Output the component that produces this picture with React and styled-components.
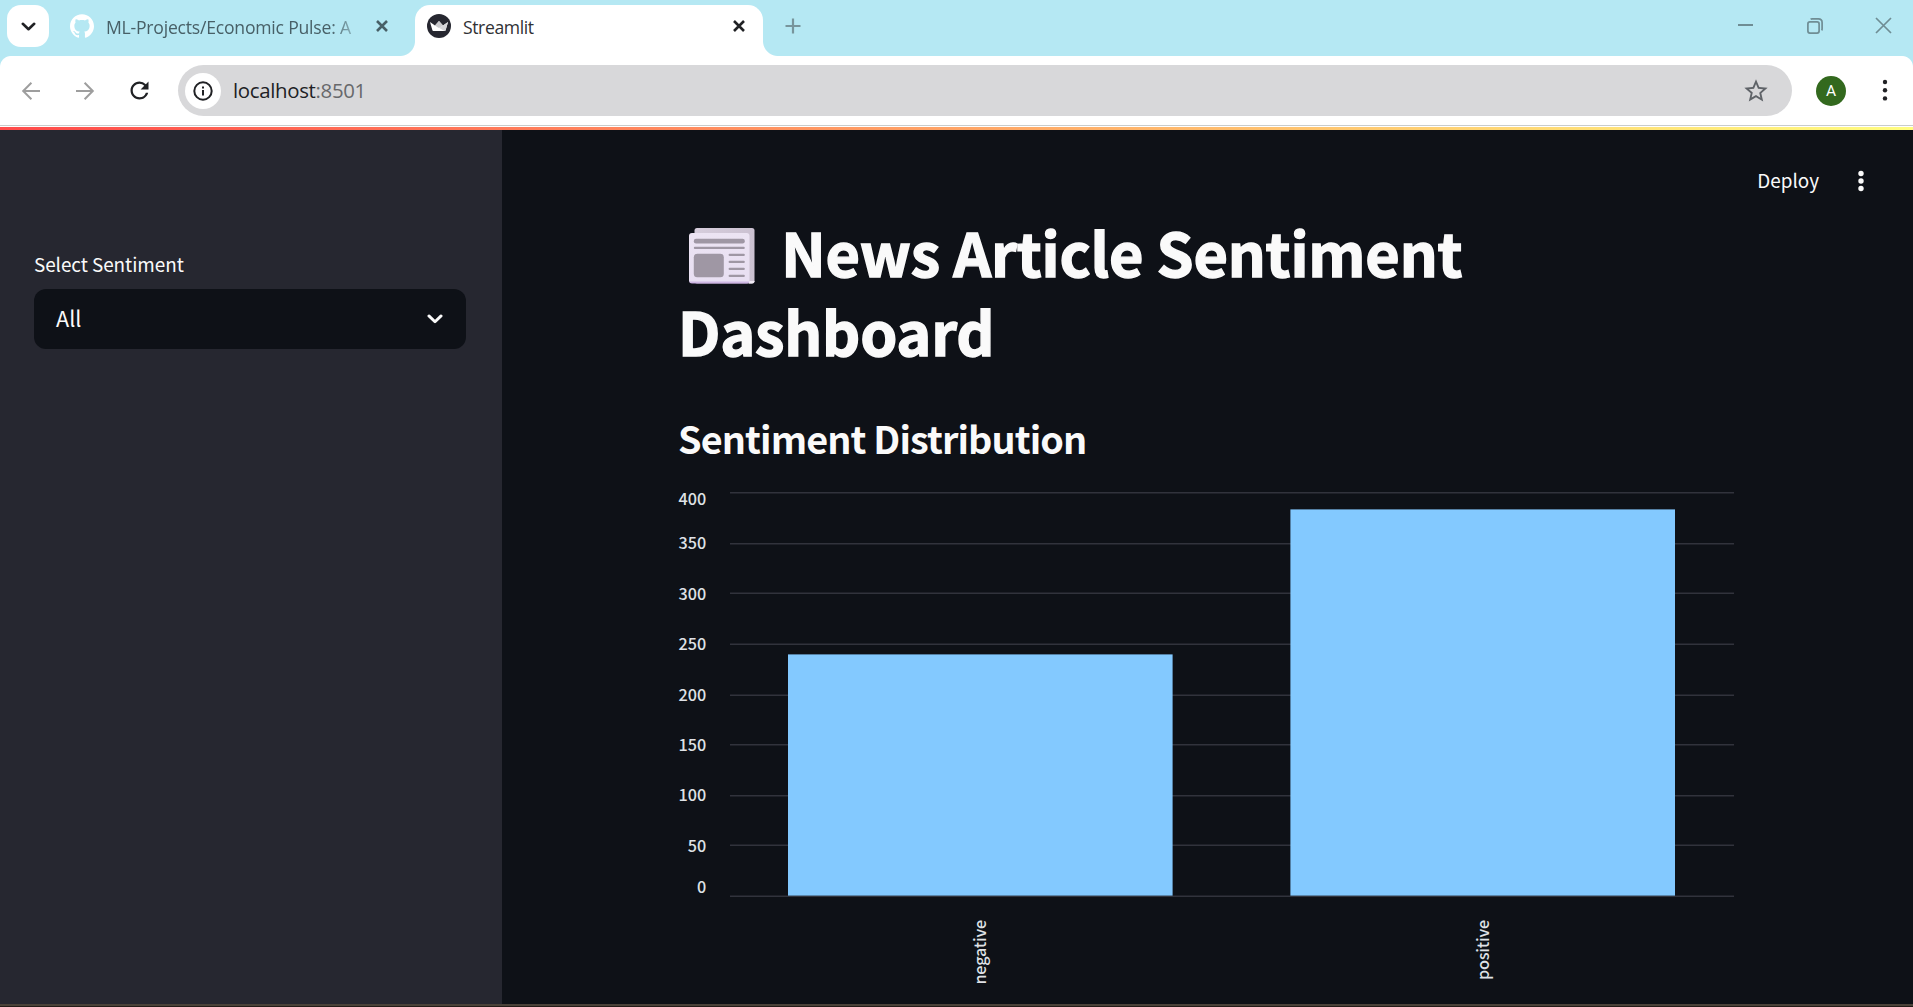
import React from 'react';
import styled, { createGlobalStyle } from 'styled-components';
import { MdRefresh, MdStarBorder } from 'react-icons/md';
import { SiGithub } from 'react-icons/si';

const GlobalStyle = createGlobalStyle`
  * { box-sizing: border-box; }
  html, body { margin: 0; padding: 0; overflow: hidden; }
  svg { display: block; flex: none; }
`;

const chromeFont = '"Open Sans", "Noto Sans", sans-serif';
const appFont = '"Noto Sans CJK SC", "Noto Sans", sans-serif';

const Window = styled.div`
  width: 1913px;
  height: 1007px;
  display: flex;
  flex-direction: column;
  overflow: hidden;
  background: #0e1117;
  font-family: ${chromeFont};
`;

/* ---------- browser frame ---------- */

const TabStrip = styled.div`
  height: 56px;
  flex: none;
  display: flex;
  align-items: flex-start;
  padding: 5px 21px 0 7px;
  background: #b5e8f3;
`;

const TabSearch = styled.button`
  width: 42px;
  height: 42px;
  padding: 0;
  border: 0;
  border-radius: 14px;
  background: #fff;
  display: flex;
  align-items: center;
  justify-content: center;
`;

const Tab = styled.div`
  width: ${(p) => (p.$active ? 348 : 345)}px;
  height: 51px;
  margin-left: ${(p) => (p.$active ? 0 : 21)}px;
  padding: ${(p) => (p.$active ? '0 18px 9px 12px' : '0 27px 9px 0')};
  display: flex;
  align-items: center;
  gap: 12px;
  position: relative;
  border-radius: 15px 15px 0 0;
  background: ${(p) => (p.$active ? '#fff' : 'transparent')};
  color: ${(p) => (p.$active ? '#303134' : '#486067')};

  ${(p) =>
    p.$active &&
    `
    &::before, &::after {
      content: '';
      position: absolute;
      bottom: 0;
      width: 15px;
      height: 15px;
    }
    &::before { left: -15px; background: radial-gradient(circle at 0 0, transparent 14.5px, #fff 15.5px); }
    &::after { right: -15px; background: radial-gradient(circle at 100% 0, transparent 14.5px, #fff 15.5px); }
  `}
`;

const TabTitle = styled.span`
  flex: 1;
  min-width: 0;
  overflow: hidden;
  white-space: nowrap;
  font-size: 17.6px;
  line-height: 26px;
  padding-top: 2px;
  letter-spacing: ${(p) => p.$tracking || 0}px;
  ${(p) => p.$fade && 'mask-image: linear-gradient(90deg, #000 224px, transparent 262px);'}
`;

const NewTab = styled.div`
  margin: 13px 0 0 22px;
`;

const WindowControls = styled.div`
  margin: 12px 0 0 auto;
  display: flex;
  gap: 52px;
`;

const Toolbar = styled.div`
  height: 71px;
  flex: none;
  display: flex;
  align-items: center;
  padding: 0 25px 2px 20px;
  background: linear-gradient(#c9cccb, #c9cccb) 0 69px / 100% 1px no-repeat,
    radial-gradient(circle at 11px 11px, transparent 10.5px, #b5e8f3 11.5px) 0 0 / 11px 11px no-repeat,
    radial-gradient(circle at 0 11px, transparent 10.5px, #b5e8f3 11.5px) 100% 0 / 11px 11px no-repeat,
    #fff;
`;

const NavButtons = styled.div`
  display: flex;
  align-items: center;
  gap: 32px;
  width: 158px;
  color: #9e9e9e;
`;

const Reload = styled.span`
  color: #202124;
  margin-left: -2px;
`;

const AddressBar = styled.div`
  width: 1614px;
  height: 51px;
  padding: 0 22px 0 7px;
  border-radius: 26px;
  background: #d8d8da;
  display: flex;
  align-items: center;
  justify-content: space-between;
  color: #5f6368;
`;

const AddressGroup = styled.div`
  display: flex;
  align-items: center;
  gap: 12px;
`;

const SiteInfo = styled.span`
  width: 36px;
  height: 36px;
  border-radius: 50%;
  background: #fff;
  display: flex;
  align-items: center;
  justify-content: center;
`;

const Url = styled.span`
  font-size: 20.4px;
  line-height: 30px;
  padding-bottom: 2px;
  letter-spacing: ${(p) => p.$tracking || 0}px;
  white-space: nowrap;
  color: #67686b;
`;

const UrlHost = styled.span`
  color: #202124;
`;

const Avatar = styled.span`
  width: 30px;
  height: 30px;
  margin: 0 auto 0 24px;
  border-radius: 50%;
  background: #33691e;
  color: #fff;
  font: 400 15.5px/31px Roboto, sans-serif;
  text-align: center;
`;

/* ---------- Streamlit app ---------- */

const Decoration = styled.div`
  height: 3px;
  flex: none;
  background: linear-gradient(90deg, #ff4b4b, #fffd80);
`;

const AppShell = styled.div`
  flex: 1;
  min-height: 0;
  display: flex;
  font-family: ${appFont};
  color: #fafafa;
`;

const Sidebar = styled.aside`
  width: 502px;
  padding: 118px 36px 0 34px;
  background: #262730;
`;

const FieldLabel = styled.label`
  display: block;
  height: 41px;
  font-size: 18.9px;
  line-height: 32px;
  letter-spacing: -0.05px;
`;

const SelectBox = styled.div`
  height: 60px;
  padding: 0 23px 0 22px;
  border-radius: 12px;
  background: #0e1117;
  display: flex;
  align-items: center;
  justify-content: space-between;
  font-size: 21.6px;
  line-height: 36px;
`;

const SelectValue = styled.span`
  padding-bottom: 2px;
`;

const Main = styled.main`
  flex: 1;
  display: flex;
  flex-direction: column;
`;

const AppHeader = styled.header`
  height: 82px;
  display: flex;
  align-items: flex-start;
  justify-content: flex-end;
  padding: 35px 48px 0 0;
  gap: 38px;
`;

const Deploy = styled.span`
  font-size: 18.9px;
  line-height: 30px;
`;

const Content = styled.section`
  width: 1056px;
  margin-left: 176px;
`;

const Title = styled.h1`
  margin: 0;
  font-size: 59.4px;
  font-weight: 700;
  line-height: 79.2px;
  letter-spacing: -0.2px;
  -webkit-text-stroke: 1.4px #fafafa;
`;

const TitleIcon = styled.span`
  display: inline-block;
  margin: 0 13px 0 11px;
  vertical-align: -7px;
`;

const Heading = styled.h2`
  margin: 43px 0 0;
  font-size: 37.8px;
  font-weight: 600;
  line-height: 50px;
  letter-spacing: -0.9px;
`;

const ChartFrame = styled.div`
  margin-top: 17px;
`;

const AxisText = styled.text`
  font-family: ${appFont};
  font-size: 16.2px;
  font-weight: 500;
  fill: #dfe1e6;
  text-anchor: end;
  letter-spacing: ${(p) => p.$tracking || 0}px;
`;

const DesktopEdge = styled.div`
  height: 3px;
  flex: none;
  background: linear-gradient(#4a4239 0 2px, #241c18 2px 3px);
`;

const Cross = ({ size = 12, weight = 2.6, color = 'currentColor' }) => (
  <svg width={size} height={size} viewBox={`0 0 ${size} ${size}`} stroke={color} strokeWidth={weight} fill="none">
    <path d={`M1 1L${size - 1} ${size - 1}M${size - 1} 1L1 ${size - 1}`} />
  </svg>
);

const Chevron = ({ width, weight, color }) => (
  <svg width={width} height={width * 0.6} viewBox="0 0 15 9" fill="none" stroke={color} strokeWidth={weight} strokeLinecap="round" strokeLinejoin="round">
    <path d="M1.8 1.8L7.5 7.2L13.2 1.8" />
  </svg>
);

const Dots = ({ gap, r, color }) => (
  <svg width="6" height={gap * 2 + 6} fill={color}>
    <circle cx="3" cy="3" r={r} />
    <circle cx="3" cy={gap + 3} r={r} />
    <circle cx="3" cy={gap * 2 + 3} r={r} />
  </svg>
);

const Arrow = ({ flip }) => (
  <svg width="22" height="22" viewBox="0 0 22 22" fill="none" stroke="currentColor" strokeWidth="2" transform={flip ? 'scale(-1 1)' : undefined}>
    <path d="M20 11H3.4M11.4 2.8L3.2 11L11.4 19.2" />
  </svg>
);

const CrownIcon = () => (
  <svg width="24" height="24" viewBox="0 0 24 24">
    <circle cx="12" cy="12" r="12" fill="#262730" />
    <path d="M3 8L8 11.4L12 7L16 11.4L21 8L18.6 16.2Q18.4 17 17.6 17H6.4Q5.6 17 5.4 16.2Z" fill="#fff" />
    <path d="M8 11.4L12 7L16 11.4L12 14Z" fill="#c9c9cc" />
    <path d="M21 8L18.6 16.2Q18.4 17 17.6 17L8 11.4L12 14L16 11.4Z" fill="#d5d5d8" />
  </svg>
);

const NewspaperIcon = () => (
  <svg width="66" height="56" viewBox="0 0 66 56">
    <defs>
      <linearGradient id="paperBack" x1="0" x2="1">
        <stop offset="0" stopColor="#d6cddc" />
        <stop offset="1" stopColor="#cbc1d1" />
      </linearGradient>
      <linearGradient id="paperFront" x1="0" y1="0" x2="0" y2="1">
        <stop offset="0" stopColor="#ece4f3" />
        <stop offset="0.94" stopColor="#e8dff2" />
        <stop offset="1" stopColor="#bfa0da" />
      </linearGradient>
    </defs>
    <rect x="5.5" y="0" width="60" height="55.6" rx="2.5" fill="url(#paperBack)" />
    <path d="M60 53H65.5V53.5Q65 55.6 63 55.6H60Z" fill="#efe9f3" />
    <rect x="0" y="5" width="60.5" height="50.6" rx="3" fill="url(#paperFront)" />
    <g fill="#9f97a4">
      <rect x="4.8" y="10.7" width="51" height="4.8" rx="2.2" />
      <rect x="4.8" y="18.8" width="51" height="2.3" rx="1.1" />
      <rect x="4.8" y="25.7" width="30" height="23.6" rx="3.5" />
      <rect x="39.6" y="25.7" width="16.2" height="2.2" rx="1" />
      <rect x="39.6" y="32.8" width="16.2" height="2.2" rx="1" />
      <rect x="39.6" y="39.8" width="16.2" height="2.2" rx="1" />
      <rect x="39.6" y="46.8" width="16.2" height="2.2" rx="1" />
    </g>
  </svg>
);

/* Tick rows: label, gridline top and label baseline in chart coordinates. */
const ticks = [
  [400, 12, 24.6],
  [350, 63, 69],
  [300, 112.5, 120],
  [250, 163.5, 170],
  [200, 214.5, 221],
  [150, 264, 270.8],
  [100, 315, 321],
  [50, 364.5, 371.6],
  [0, 415.5, 413],
];

const bars = [
  { label: 'negative', x: 110, y: 174.4, labelX: 307.7 },
  { label: 'positive', x: 612.4, y: 29.4, labelX: 810.7 },
];

const SentimentChart = () => (
  <svg width="1058" height="520" viewBox="0 0 1058 520">
    {ticks.map(([value, y]) => (
      <rect key={value} x="52" y={y} width="1004" height="1.5" fill="#31333c" />
    ))}
    {bars.map((b) => (
      <rect key={b.label} x={b.x} y={b.y} width="384.6" height={415.6 - b.y} fill="#83c9ff" />
    ))}
    {ticks.map(([value, , baseline]) => (
      <AxisText key={value} x="28.3" y={baseline}>{value}</AxisText>
    ))}
    {bars.map((b) => (
      <AxisText key={b.label} $tracking={-0.2} transform={`translate(${b.labelX} 440) rotate(-90)`}>{b.label}</AxisText>
    ))}
  </svg>
);

export default function App() {
  return (
    <Window>
      <GlobalStyle />
      <TabStrip>
        <TabSearch><Chevron width={15} weight={2.6} color="#202124" /></TabSearch>
        <Tab>
          <SiGithub size={24} color="#fff" />
          <TabTitle $fade $tracking={-0.22}>ML-Projects/Economic Pulse: A</TabTitle>
          <Cross />
        </Tab>
        <Tab $active>
          <CrownIcon />
          <TabTitle $tracking={-0.4}>Streamlit</TabTitle>
          <Cross color="#202124" />
        </Tab>
        <NewTab>
          <svg width="16" height="16" stroke="#78959c" strokeWidth="2.2"><path d="M8 .5V15.5M.5 8H15.5" /></svg>
        </NewTab>
        <WindowControls>
          <svg width="17" height="17" stroke="#6f8d94" strokeWidth="2"><path d="M1 8H16" /></svg>
          <svg width="17" height="17" fill="none" stroke="#6f8d94" strokeWidth="1.7">
            <rect x="1.9" y="4.9" width="11.2" height="11.2" rx="2" />
            <path d="M4.6 2.3Q5.2 1.9 6 1.9H12.4Q16.1 1.9 16.1 5.6V12Q16.1 12.8 15.6 13.4" />
          </svg>
          <Cross size={17} weight={1.7} color="#6f8d94" />
        </WindowControls>
      </TabStrip>

      <Toolbar>
        <NavButtons>
          <Arrow />
          <Arrow flip />
          <Reload><MdRefresh size={27} /></Reload>
        </NavButtons>
        <AddressBar>
          <AddressGroup>
            <SiteInfo>
              <svg width="20" height="20" viewBox="0 0 20 20" fill="none" stroke="#202124" strokeWidth="2">
                <circle cx="10" cy="10" r="8.7" />
                <path d="M10 9V14.4M10 5.4V7.4" />
              </svg>
            </SiteInfo>
            <Url $tracking={-0.32}><UrlHost>localhost</UrlHost>:8501</Url>
          </AddressGroup>
          <MdStarBorder size={28} />
        </AddressBar>
        <Avatar>A</Avatar>
        <Dots gap={8.2} r={2.2} color="#202124" />
      </Toolbar>

      <Decoration />
      <AppShell>
        <Sidebar>
          <FieldLabel>Select Sentiment</FieldLabel>
          <SelectBox>
            <SelectValue>All</SelectValue>
            <Chevron width={16} weight={2.7} color="#fafafa" />
          </SelectBox>
        </Sidebar>
        <Main>
          <AppHeader>
            <Deploy>Deploy</Deploy>
            <svg width="8" height="32" fill="#fafafa">
              <circle cx="4" cy="8.5" r="2.7" />
              <circle cx="4" cy="16" r="2.7" />
              <circle cx="4" cy="23.5" r="2.7" />
            </svg>
          </AppHeader>
          <Content>
            <Title>
              <TitleIcon><NewspaperIcon /></TitleIcon> News Article Sentiment Dashboard
            </Title>
            <Heading>Sentiment Distribution</Heading>
            <ChartFrame><SentimentChart /></ChartFrame>
          </Content>
        </Main>
      </AppShell>
      <DesktopEdge />
    </Window>
  );
}
